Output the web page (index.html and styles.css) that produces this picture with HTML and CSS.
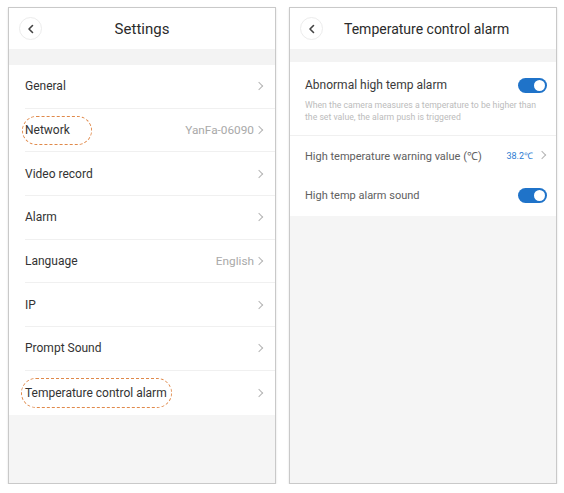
FILE: index.html
```html
<!DOCTYPE html>
<html>
<head>
<meta charset="utf-8">
<link rel="stylesheet" href="styles.css">
</head>
<body>
<div class="screens">
  <div class="panel">
    <div class="header">
      <span class="back"><svg width="8" height="10" viewBox="0 0 8 10"><path d="M5.5 1.5 L2 5 L5.5 8.5" fill="none" stroke="#444" stroke-width="1.6" stroke-linecap="round" stroke-linejoin="round"/></svg></span>
      <span class="title center">Settings</span>
    </div>
    <div class="band"></div>
    <div class="list">
      <div class="row"><span class="label">General</span><span class="chev"></span></div>
      <div class="row"><span class="label mark mark-net">Network</span><span class="value">YanFa-06090</span><span class="chev"></span></div>
      <div class="row"><span class="label">Video record</span><span class="chev"></span></div>
      <div class="row"><span class="label">Alarm</span><span class="chev"></span></div>
      <div class="row"><span class="label">Language</span><span class="value">English</span><span class="chev"></span></div>
      <div class="row"><span class="label">IP</span><span class="chev"></span></div>
      <div class="row"><span class="label">Prompt Sound</span><span class="chev"></span></div>
      <div class="row last"><span class="label mark mark-temp">Temperature control alarm</span><span class="chev"></span></div>
    </div>
  </div>
  <div class="panel">
    <div class="header">
      <span class="back"><svg width="8" height="10" viewBox="0 0 8 10"><path d="M5.5 1.5 L2 5 L5.5 8.5" fill="none" stroke="#444" stroke-width="1.6" stroke-linecap="round" stroke-linejoin="round"/></svg></span>
      <span class="title side">Temperature control alarm</span>
    </div>
    <div class="band band-r"></div>
    <div class="list">
      <div class="block">
        <div class="block-head"><span class="label-r strong">Abnormal high temp alarm</span><span class="toggle"></span></div>
        <div class="desc">When the camera measures a temperature to be higher than the set value, the alarm push is triggered</div>
      </div>
      <div class="row-r"><span class="label-r">High temperature warning value (℃)</span><span class="value-blue">38.2℃</span><span class="chev"></span></div>
      <div class="row-r tall"><span class="label-r">High temp alarm sound</span><span class="toggle"></span></div>
    </div>
  </div>
</div>
</body>
</html>
```

FILE: styles.css
```css
html, body {
  margin: 0;
  padding: 0;
  background: #ffffff;
  font-family: Roboto, "Liberation Sans", Arial, sans-serif;
}
.screens {
  display: flex;
  gap: 13px;
  padding: 7px 0 0 8px;
}
.panel {
  width: 266px;
  height: 475px;
  border: 1px solid #c9c9c9;
  box-shadow: 0 1px 2px rgba(0,0,0,0.12);
  background: #f5f5f5;
  display: flex;
  flex-direction: column;
}
.header {
  height: 41px;
  background: #fff;
  display: flex;
  align-items: center;
  position: relative;
  padding-left: 10px;
}
.back {
  width: 21px;
  height: 21px;
  border-radius: 50%;
  border: 1px solid #ececec;
  display: flex;
  align-items: center;
  justify-content: center;
  flex-shrink: 0;
}
.title {
  color: #2b2b2b;
  font-size: 15px;
}
.title.center {
  position: absolute;
  left: 0;
  right: 0;
  text-align: center;
  pointer-events: none;
}
.title.side {
  font-size: 14px;
  margin-left: 21px;
}
.band {
  height: 16px;
  background: #f3f3f3;
}
.band-r {
  height: 13px;
}
.list {
  background: #fff;
}
.row {
  height: 43.7px;
  box-sizing: border-box;
  display: flex;
  align-items: center;
  margin-left: 16px;
  padding-right: 13px;
  border-bottom: 1px solid #f0f0f0;
}
.row.last {
  border-bottom: none;
}
.label {
  color: #333;
  font-size: 12px;
  flex: 1;
}
.mark {
  flex: 0 0 auto;
  position: relative;
}
.row .mark + .chev,
.row .mark + .value { margin-left: auto; }
.mark::after {
  content: "";
  position: absolute;
  border: 1.3px dashed #e0894a;
  border-radius: 16px;
}
.mark-net::after {
  left: -3px; right: -22px; top: -7px; bottom: -8px;
}
.mark-temp::after {
  left: -4px; right: -5px; top: -8px; bottom: -8px;
}
.value {
  color: #a9a9a9;
  font-size: 11.8px;
  margin-right: 0;
}
.chev {
  width: 5px;
  height: 5px;
  border-top: 1.2px solid #b5b5b5;
  border-right: 1.2px solid #b5b5b5;
  transform: rotate(45deg);
  margin-left: 2px;
}
.block {
  padding: 15px 8px 12px 15px;
  border-bottom: 1px solid #f0f0f0;
}
.block-head {
  display: flex;
  align-items: center;
  justify-content: space-between;
  padding-right: 1px;
  height: 16px;
}
.label-r {
  color: #606060;
  font-size: 11px;
  flex: 1;
}
.label-r.strong {
  color: #3a3a3a;
  font-size: 12px;
}
.desc {
  margin-top: 6px;
  color: #bcbcbc;
  font-size: 8.7px;
  line-height: 12px;
}
.row-r {
  height: 38px;
  display: flex;
  align-items: center;
  padding: 0 11px 0 15px;
}
.row-r.tall {
  height: 42px;
  padding-right: 9px;
}
.value-blue {
  color: #2c7bd2;
  font-size: 9px;
  margin-right: 4px;
}
.toggle {
  width: 29px;
  height: 15px;
  border-radius: 8px;
  background: #1f73c9;
  position: relative;
  flex-shrink: 0;
}
.toggle::after {
  content: "";
  position: absolute;
  right: 2px;
  top: 2px;
  width: 11px;
  height: 11px;
  border-radius: 50%;
  background: #fff;
}
```
